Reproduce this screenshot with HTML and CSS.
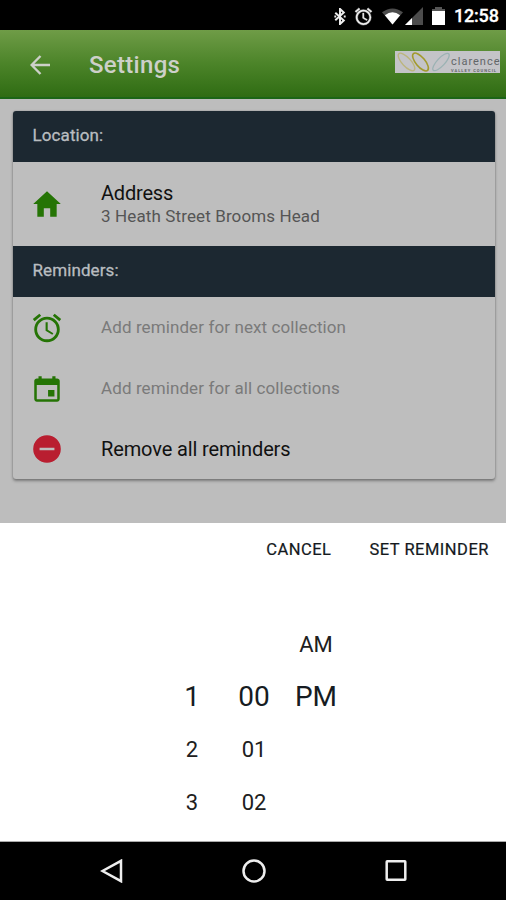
FILE: index.html
```html
<!DOCTYPE html>
<html lang="en">
<head>
<meta charset="utf-8">
<title>Settings</title>
<link rel="stylesheet" href="styles.css">
</head>
<body>
<div class="screen">
  <div class="status">
    <svg class="bt" viewBox="0 0 12 18" fill="none" stroke="#eee" stroke-width="2.1"><path d="M1 5l9 8.2L6 17V1l4 3.8L1 13"/><path d="M0 9h2M10 9h2"/></svg>
    <svg class="alarm-s" viewBox="2 2 20 20" fill="#eee" stroke="#eee" stroke-width=".5"><path d="M22 5.72l-4.6-3.86-1.29 1.53 4.6 3.86L22 5.72zM7.88 3.39L6.6 1.86 2 5.71l1.29 1.53 4.59-3.85zM12.5 8H11v6l4.75 2.85.75-1.23-4-2.37V8zM12 4c-4.97 0-9 4.03-9 9s4.02 9 9 9a9 9 0 0 0 0-18zm0 16c-3.87 0-7-3.13-7-7s3.13-7 7-7 7 3.13 7 7-3.13 7-7 7z"/></svg>
    <svg class="wifi" viewBox="0 0 22 17"><path d="M0 4Q11-4 22 4L11 17z" fill="#4c4c4c"/><path d="M3 7.2Q11 1 19 7.2L11 17z" fill="#fff"/></svg>
    <svg class="cell" viewBox="0 0 18 18"><path d="M18 0v18H0z" fill="#4c4c4c"/><path d="M7 11v7H0z" fill="#fff"/></svg>
    <svg class="battery" viewBox="0 0 13 18"><path d="M3 0h7v2h3v3H0V2h3z" fill="#555"/><path d="M0 4h13v14H0z" fill="#fff"/></svg>
    <span class="clock">12:58</span>
  </div>
  <header class="toolbar">
    <svg class="back" viewBox="0 0 20 20" fill="none" stroke="#cdd0c9" stroke-width="2.4"><path d="M20 10H2M10.5 1L1.6 10l8.9 9"/></svg>
    <h1 class="title">Settings</h1>
    <div class="logo">
      <svg class="leaves" viewBox="0 0 56 22" fill="none"><ellipse cx="11.500" cy="11" rx="4.300" ry="11.300" transform="rotate(-43 11.500 11)" stroke="#bcb57c" stroke-width="1.3"/><ellipse cx="25.5" cy="11" rx="4.6" ry="11" transform="rotate(-40 25.5 11)" stroke="#a29a2c" stroke-width="1.6"/><ellipse cx="46" cy="11" rx="3.900" ry="11.300" transform="rotate(43 46 11)" stroke="#9bb2b3" stroke-width="1.3"/></svg>
      <div class="brand"><span class="brand-name">clarence</span><span class="brand-sub">VALLEY COUNCIL</span></div>
    </div>
  </header>
  <main class="content">
    <section class="card">
      <h2 class="section">Location:</h2>
      <div class="row address">
        <svg class="icon" viewBox="0 0 512 512"><path d="M208 448V320h96v128h97.6V256H464L256 64 48 256h62.4v192z"/></svg>
        <div><div class="label address-label">Address</div><div class="detail">3 Heath Street Brooms Head</div></div>
      </div>
      <h2 class="section">Reminders:</h2>
      <div class="row next">
        <svg class="icon" viewBox="0 0 24 24"><path d="M22 5.72l-4.6-3.86-1.29 1.53 4.6 3.86L22 5.72zM7.88 3.39L6.6 1.86 2 5.71l1.29 1.53 4.59-3.85zM12.5 8H11v6l4.75 2.85.75-1.23-4-2.37V8zM12 4c-4.97 0-9 4.03-9 9s4.02 9 9 9a9 9 0 0 0 0-18zm0 16c-3.87 0-7-3.13-7-7s3.13-7 7-7 7 3.13 7 7-3.13 7-7 7z"/></svg>
        <span class="muted">Add reminder for next collection</span>
      </div>
      <div class="row all">
        <svg class="icon" viewBox="0 0 512 512"><path d="M368 272h-96v96h96zM336 64v32H176V64h-48v32h-24c-22 0-40 18-40 40v272c0 22 18 40 40 40h304c22 0 40-18 40-40V136c0-22-18-40-40-40h-24V64zm74 346H102V196h308z"/></svg>
        <span class="muted">Add reminder for all collections</span>
      </div>
      <div class="row remove">
        <svg class="icon red" viewBox="0 0 512 512"><path d="M256 48a208 208 0 1 0 0 416 208 208 0 0 0 0-416zm112 226H144v-38h224z"/></svg>
        <span class="label">Remove all reminders</span>
      </div>
    </section>
  </main>
  <section class="sheet">
    <div class="actions"><button class="action">CANCEL</button><button class="action">SET REMINDER</button></div>
    <div class="picker">
      <div class="col"><span></span><span class="on">1</span><span>2</span><span>3</span></div>
      <div class="col"><span></span><span class="on">00</span><span>01</span><span>02</span></div>
      <div class="col period"><span>AM</span><span class="on">PM</span></div>
    </div>
  </section>
  <nav class="nav">
    <svg viewBox="0 0 24 24"><path d="M21 1.8v20.400L2.500 12z"/></svg>
    <svg viewBox="0 0 24 24"><circle cx="12" cy="12" r="10.500"/></svg>
    <svg viewBox="0 0 24 24"><rect x="2.700" y="2.200" width="18.600" height="18.600" rx=".5"/></svg>
  </nav>
</div>
</body>
</html>
```
FILE: styles.css
```css
* { box-sizing: border-box; }
body { margin: 0; font-family: Roboto, "Liberation Sans", sans-serif; }
h1, h2 { margin: 0; font-weight: 500; }
.screen { width: 506px; height: 900px; display: flex; flex-direction: column; overflow: hidden; background: #bdbdbd; }

.status { height: 30px; flex: none; background: #000; display: flex; align-items: center; padding: 2px 8px 0 0; justify-content: flex-end; }
.bt { width: 12px; height: 17px; margin-right: 9px; }
.alarm-s { width: 17px; height: 17px; margin-right: 10px; overflow: visible; }
.wifi { width: 21px; height: 17px; margin-right: 2px; }
.cell { width: 18px; height: 18px; margin-right: 9px; }
.battery { width: 13px; height: 18px; margin-right: 9px; }
.clock { width: 44px; color: #fff; font-size: 18px; font-weight: 500; line-height: 26px; white-space: nowrap; letter-spacing: -.2px; -webkit-text-stroke: .3px; }

.toolbar { height: 69px; flex: none; display: flex; align-items: center; padding: 0 6px 0 30px; background: linear-gradient(#6f9c47, #4c8429 50%, #2f6c13); border-bottom: 2px solid #1b6516; }
.back { width: 20px; height: 20px; margin-right: 39px; position: relative; top: 1px; }
.title { font-size: 24px; line-height: 30px; letter-spacing: .3px; color: #cdd0c9; flex: 1; padding-top: 3px; }
.logo { width: 105px; height: 22px; margin-top: -3px; background: #c4c4c8; display: flex; }
.leaves { width: 56px; height: 22px; flex: none; }
.brand { display: flex; flex-direction: column; white-space: nowrap; padding-top: 4px; color: #626669; }
.brand-name { font-size: 11px; line-height: 13px; letter-spacing: 1px; height: 13px; }
.brand-sub { font-size: 4px; line-height: 5px; font-weight: 700; letter-spacing: 1px; }

.content { height: 424px; flex: none; padding: 12px 11px 0 13px; }
.card { height: 368px; background: #bebebe; border-radius: 3px; overflow: hidden; box-shadow: 0 2px 3px rgba(0,0,0,.35), 0 0 2px rgba(0,0,0,.2); }
.section { height: 51px; background: #1c2831; color: #b9bdc0; font-size: 17px; line-height: 49px; letter-spacing: .1px; padding-left: 19.500px; font-weight: 400; -webkit-text-stroke: .3px; }
.row { display: flex; align-items: center; padding-left: 17px; }
.address { height: 84px; padding-bottom: 1px; }
.icon { width: 34px; height: 34px; margin-right: 37px; fill: #257405; flex: none; }
.red { fill: #b91e30; }
.label { font-size: 20px; line-height: 24px; letter-spacing: -.13px; color: #111; }
.address-label { letter-spacing: -.2px; }
.detail { font-size: 17px; line-height: 22px; letter-spacing: .12px; color: #555; }
.next { height: 62px; }
.all { height: 60px; }
.remove { height: 61px; padding-bottom: 2px; }
.muted { font-size: 17px; letter-spacing: .1px; color: #7a7a7a; padding-bottom: 3px; }

.sheet { height: 319px; flex: none; background: #fff; border-bottom: 1px solid #aaa; }
.actions { height: 54px; display: flex; justify-content: flex-end; gap: 38px; padding-right: 17px; }
.action { padding: 0; border: 0; background: none; font: 400 16.500px/54px Roboto, sans-serif; letter-spacing: .5px; color: #14191d; -webkit-text-stroke: .2px; }
.picker { display: flex; margin-top: 40px; padding-left: 161px; height: 213px; }
.col { width: 62px; display: flex; flex-direction: column; text-align: center; color: #202020; font-size: 22px; line-height: 53px; }
.col span { height: 53px; }
.period { line-height: 55px; }
.col .on { font-size: 28px; line-height: 53px; color: #161c22; }

.nav { flex: 1; background: #000; display: flex; justify-content: center; gap: 118px; align-items: center; padding: 0 0 0 2px; }
.nav svg { width: 24px; height: 24px; fill: none; stroke: #eee; stroke-width: 2.500; }
```
